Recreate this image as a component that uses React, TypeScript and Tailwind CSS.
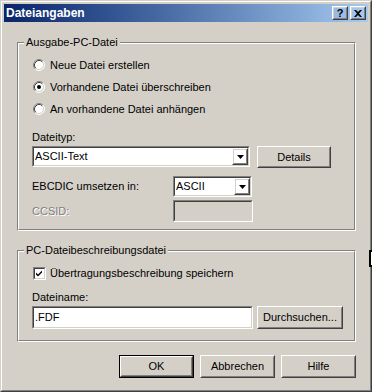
import React from "react";

const Raised = ({
  className = "",
  isDefault = false,
  children,
}: {
  className?: string;
  isDefault?: boolean;
  children?: React.ReactNode;
}) => {
  const inner = (
    <div className="h-full border border-t-white border-l-white border-r-[#404040] border-b-[#404040]">
      <div className="h-full border border-t-[#d4d0c8] border-l-[#d4d0c8] border-r-[#808080] border-b-[#808080] flex items-center justify-center">
        {children}
      </div>
    </div>
  );
  if (isDefault) {
    return <div className={`border border-black ${className}`}>{inner}</div>;
  }
  return <div className={className}>{inner}</div>;
};

const Sunken = ({
  className = "",
  bg = "bg-white",
  children,
}: {
  className?: string;
  bg?: string;
  children?: React.ReactNode;
}) => (
  <div className={`border border-t-[#808080] border-l-[#808080] border-r-white border-b-white ${className}`}>
    <div className={`h-full border border-t-[#404040] border-l-[#404040] border-r-[#d4d0c8] border-b-[#d4d0c8] flex items-center ${bg}`}>
      {children}
    </div>
  </div>
);

const Arrow = () => (
  <svg width="7" height="4" viewBox="0 0 7 4">
    <path d="M0 0h7L3.5 4z" fill="#000" />
  </svg>
);

const Combo = ({ value, className }: { value: string; className: string }) => (
  <Sunken className={className}>
    <span className="flex-1 pl-[1px] leading-[13px]">{value}</span>
    <Raised className="w-[16px] h-full">
      <Arrow />
    </Raised>
  </Sunken>
);

const Radio = ({ checked = false }: { checked?: boolean }) => (
  <svg width="12" height="12" viewBox="0 0 12 12" className="shrink-0">
    <circle cx="6" cy="6" r="5" fill="#fff" />
    <path d="M2.11 9.89A5.5 5.5 0 0 1 9.89 2.11" stroke="#808080" fill="none" />
    <path d="M9.89 2.11A5.5 5.5 0 0 1 2.11 9.89" stroke="#fff" fill="none" />
    <path d="M2.82 9.18A4.5 4.5 0 0 1 9.18 2.82" stroke="#404040" fill="none" />
    <path d="M9.18 2.82A4.5 4.5 0 0 1 2.82 9.18" stroke="#d4d0c8" fill="none" />
    {checked && <circle cx="6" cy="6" r="2" fill="#000" />}
  </svg>
);

const Check = () => (
  <Sunken className="w-[13px] h-[13px] shrink-0">
    <svg width="9" height="9" viewBox="0 0 9 9">
      <path d="M1 3.5l2 2 4-4v2l-4 4-2-2z" fill="#000" />
    </svg>
  </Sunken>
);

const Group = ({
  title,
  className,
  children,
}: {
  title: string;
  className: string;
  children: React.ReactNode;
}) => (
  <div className={`relative border border-t-[#808080] border-l-[#808080] border-r-white border-b-white ${className}`}>
    <div className="h-full border border-t-white border-l-white border-r-[#808080] border-b-[#808080] pl-[13px]">
      {children}
    </div>
    <span className="absolute -top-[7px] left-[6px] px-[2px] bg-[#d4d0c8] leading-[13px]">{title}</span>
  </div>
);

export default function App() {
  const options = ["Neue Datei erstellen", "Vorhandene Datei überschreiben", "An vorhandene Datei anhängen"];

  return (
    <div className="relative w-[372px] h-[392px] bg-[#d4d0c8] border border-t-[#d4d0c8] border-l-[#d4d0c8] border-r-[#404040] border-b-[#404040] font-['Liberation_Sans',Arial,sans-serif] text-[11px] text-black">
      <div className="h-full border border-t-white border-l-white border-r-[#808080] border-b-[#808080] p-[2px] flex flex-col">
        <div className="h-[18px] bg-linear-to-r from-[#0a246a] to-[#a6caf0] flex items-center pl-[2px] pr-[2px]">
          <span className="flex-1 text-white font-bold text-[12px] leading-[14px]">Dateiangaben</span>
          <Raised className="w-[16px] h-[14px]">
            <span className="font-bold text-[11px] leading-[10px]">?</span>
          </Raised>
          <Raised className="w-[16px] h-[14px] ml-[2px]">
            <svg width="8" height="7" viewBox="0 0 8 7">
              <path d="M0 0h2l2 2 2-2h2L5 3.5 8 7H6L4 5 2 7H0l3-3.5z" fill="#000" />
            </svg>
          </Raised>
        </div>

        <Group title="Ausgabe-PC-Datei" className="ml-[13px] mt-[20px] w-[339px] h-[189px]">
          <div className="pt-[10px] flex flex-col">
            {options.map((o, i) => (
              <div key={i} className="h-[22px] flex items-center gap-[5px] pl-[1px]">
                <Radio checked={i === 1} />
                <span>{o}</span>
              </div>
            ))}
          </div>
          <div className="mt-[11px] leading-[13px]">Dateityp:</div>
          <div className="mt-[2px] flex h-[21px]">
            <Combo value="ASCII-Text" className="w-[218px] h-full" />
            <Raised className="ml-[7px] w-[74px] h-[22px]">Details</Raised>
          </div>
          <div className="mt-[9px] flex items-center h-[21px]">
            <span className="w-[141px]">EBCDIC umsetzen in:</span>
            <Combo value="ASCII" className="w-[79px] h-full" />
          </div>
          <div className="mt-[3px] flex items-center h-[22px]">
            <span className="w-[141px] text-[#808080] [text-shadow:1px_1px_0_#fff]">CCSID:</span>
            <Sunken className="w-[80px] h-full" bg="bg-[#d4d0c8]" />
          </div>
        </Group>

        <Group title="PC-Dateibeschreibungsdatei" className="ml-[13px] mt-[19px] w-[339px] h-[92px]">
          <div className="pt-[10px] h-[32px] flex items-center gap-[4px] pl-[1px]">
            <Check />
            <span>Übertragungsbeschreibung speichern</span>
          </div>
          <div className="mt-[7px] leading-[13px]">Dateiname:</div>
          <div className="mt-[2px] flex h-[23px]">
            <Sunken className="w-[221px] h-full">
              <span className="pl-[1px]">.FDF</span>
            </Sunken>
            <Raised className="ml-[4px] w-[86px] h-full">Durchsuchen...</Raised>
          </div>
        </Group>

        <div className="mt-[13px] flex justify-end gap-[6px] pr-[12px]">
          <Raised isDefault className="w-[75px] h-[23px]">OK</Raised>
          <Raised className="w-[75px] h-[23px]">Abbrechen</Raised>
          <Raised className="w-[75px] h-[23px]">Hilfe</Raised>
        </div>
      </div>
      <div className="absolute left-[368px] top-[249px] w-[4px] h-[17px] border-l-2 border-t-2 border-b-2 border-black bg-white" />
    </div>
  );
}
